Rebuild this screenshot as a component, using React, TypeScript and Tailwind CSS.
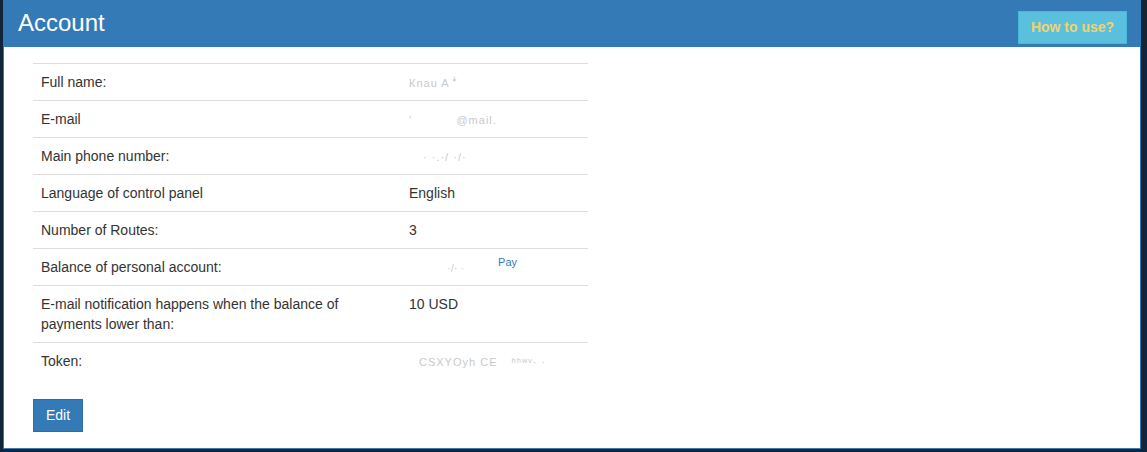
import React from 'react';

type Row = {
  label: string;
  value: React.ReactNode;
};

const faint = 'text-[#c9c9c9] text-[11px] tracking-[1px]';

const rows: Row[] = [
  { label: 'Full name:', value: <span className={faint}>Кnau A<span className="ml-[2px]">ꜜ</span></span> },
  {
    label: 'E-mail',
    value: (
      <span className={faint}>
        <span>ʻ</span>
        <span className="ml-[44px]">@mail.</span>
      </span>
    ),
  },
  { label: 'Main phone number:', value: <span className={`${faint} ml-[14px]`}>· ·.·/ ·/·</span> },
  { label: 'Language of control panel', value: 'English' },
  { label: 'Number of Routes:', value: '3' },
  {
    label: 'Balance of personal account:',
    value: (
      <span className="text-[11px]">
        <span className="text-[#cfcfcf] ml-[38px]">·/· ·</span>
        <span className="text-[#337ab7] ml-[34px] relative -top-[6px]">Pay</span>
      </span>
    ),
  },
  { label: 'E-mail notification happens when the balance of payments lower than:', value: '10 USD' },
  {
    label: 'Token:',
    value: (
      <span className={`${faint} ml-[10px]`}>
        CSXYOyh CE <span className="ml-[10px]">ʰʰʷᵛ· ·</span>
      </span>
    ),
  },
];

export default function App() {
  return (
    <div className="w-[1147px] h-[452px] bg-[#132639] overflow-hidden font-['Liberation_Sans',Arial,sans-serif]">
      <div className="ml-[3px] w-[1138px] h-[449px] bg-white border border-t-0 border-[#337ab7] flex flex-col">
        {/* Header */}
        <div className="h-[47px] bg-[#337ab7] flex items-center justify-between pl-[14px] pr-[13px] shrink-0">
          <h1 className="text-white text-[24px] leading-none font-normal -mt-[2px]">Account</h1>
          <button className="h-[33px] w-[109px] bg-[#5bc0de] border border-[#46b8da] text-[#f0d36b] text-[14px] font-bold mt-[8px]">
            How to use?
          </button>
        </div>

        {/* Body */}
        <div className="pl-[29px] pt-[16px]">
          <div className="h-[308px] overflow-hidden">
            <table className="w-[555px] border-collapse text-[14px] leading-[20px] text-[#333]">
              <tbody>
                {rows.map((row) => (
                  <tr key={row.label} className="border-t border-[#dddddd]">
                    <td className="w-[368px] px-[8px] py-[8px] align-top pr-[30px]">{row.label}</td>
                    <td className="px-[8px] py-[8px] align-top whitespace-nowrap">
                      <div className="h-[20px] leading-[20px]">{row.value}</div>
                    </td>
                  </tr>
                ))}
              </tbody>
            </table>
          </div>

          <button className="mt-[28px] h-[33px] w-[50px] bg-[#337ab7] border border-[#2e6da4] text-white text-[14px]">
            Edit
          </button>
        </div>
      </div>
    </div>
  );
}
